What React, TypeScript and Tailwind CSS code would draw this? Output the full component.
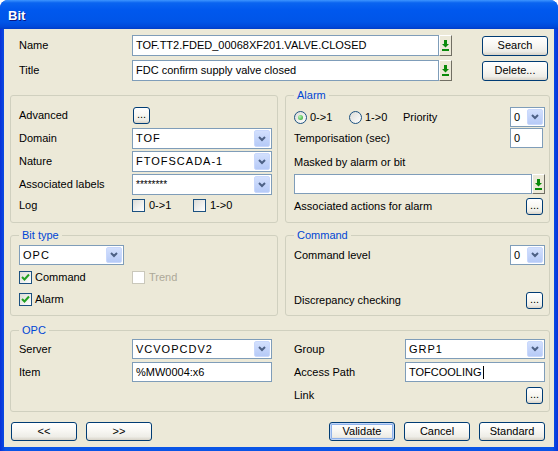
import React from 'react';

type BoxProps = { children?: React.ReactNode; className?: string };

// XP style push button
function XpButton({ children, className = '', isDefault = false }: BoxProps & { isDefault?: boolean }) {
  return (
    <div
      className={`flex shrink-0 items-center justify-center rounded-[3px] border border-[#003C74] bg-[linear-gradient(to_bottom,#ffffff_0%,#f8f7f3_45%,#eeede7_80%,#d8d3c8_100%)] text-[11px] leading-none text-black ${
        isDefault ? 'shadow-[inset_0_0_0_1px_#c2d6f8,inset_0_0_0_2px_#8fb2ea]' : ''
      } ${className}`}
    >
      {children}
    </div>
  );
}

function Dots({ className = '' }: { className?: string }) {
  return <XpButton className={`h-[17px] w-[17px] items-end pb-[3px] ${className}`}>...</XpButton>;
}

function Chevron() {
  return (
    <svg width="8" height="6" viewBox="0 0 8 6">
      <polyline points="1,1 4,4 7,1" fill="none" stroke="#4D6185" strokeWidth="2" />
    </svg>
  );
}

function Combo({ value, className = '', spaced = false }: { value: string; className?: string; spaced?: boolean }) {
  return (
    <div className={`flex shrink-0 border border-[#7F9DB9] bg-white ${className}`}>
      <div className={`flex min-w-0 flex-1 items-center overflow-hidden whitespace-nowrap pl-[3px] ${spaced ? 'tracking-[1px]' : ''}`}>
        {value}
      </div>
      <div className="m-px flex w-[16px] items-center justify-center rounded-[2px] border border-[#c9d8fc] bg-[linear-gradient(to_bottom,#d3e0fd,#b6caf7)]">
        <Chevron />
      </div>
    </div>
  );
}

function TextBox({ children, className = '' }: BoxProps) {
  return (
    <div className={`flex shrink-0 items-center whitespace-nowrap border border-[#7F9DB9] bg-white pl-[3px] ${className}`}>
      {children}
    </div>
  );
}

function GreenArrow() {
  return (
    <svg width="7" height="11" viewBox="0 0 7 11">
      <rect x="2" y="0" width="3" height="4" fill="#0A8A0A" />
      <polygon points="0,4 7,4 3.5,7.5" fill="#0A8A0A" />
      <rect x="0" y="9" width="7" height="2" fill="#0A8A0A" />
    </svg>
  );
}

function BrowseBox({ value, className = '' }: { value: string; className?: string }) {
  return (
    <div className={`flex shrink-0 ${className}`}>
      <div className="flex min-w-0 flex-1 items-center whitespace-nowrap border border-[#7F9DB9] bg-white pl-[3px]">{value}</div>
      <div className="flex w-[13px] items-center justify-center border border-b-[#716F64] border-l-white border-r-[#716F64] border-t-white bg-[#ECE9D8]">
        <GreenArrow />
      </div>
    </div>
  );
}

function Check({ checked = false, disabled = false }: { checked?: boolean; disabled?: boolean }) {
  return (
    <div
      className={`flex h-[13px] w-[13px] shrink-0 items-center justify-center border ${
        disabled ? 'border-[#CAC8BB] bg-white' : 'border-[#1C5180] bg-[linear-gradient(135deg,#dcdcd7,#ffffff)]'
      }`}
    >
      {checked && (
        <svg width="9" height="9" viewBox="0 0 9 9">
          <path d="M1 4 L3.5 6.5 L8 1.5" fill="none" stroke="#21A121" strokeWidth="2" />
        </svg>
      )}
    </div>
  );
}

function Radio({ checked = false }: { checked?: boolean }) {
  return (
    <div className="flex h-[13px] w-[13px] shrink-0 items-center justify-center rounded-full border border-[#1C5180] bg-[linear-gradient(135deg,#dcdcd7,#ffffff)]">
      {checked && <div className="h-[5px] w-[5px] rounded-full bg-[radial-gradient(circle_at_35%_35%,#b4f4b4,#21A121)]" />}
    </div>
  );
}

function Frame({ label, className = '', children }: BoxProps & { label?: string }) {
  return (
    <div className={`relative shrink-0 rounded-[3px] border border-[#D0D0BF] ${className}`}>
      {label && (
        <span className="absolute -top-[7px] left-[8px] bg-[#ECE9D8] px-[3px] leading-[13px] text-[#0046D5]">{label}</span>
      )}
      {children}
    </div>
  );
}

export default function App() {
  return (
    <div className="h-[451px] w-[558px] bg-white font-['Liberation_Sans',Arial,sans-serif] text-[11px] text-black">
      <div className="flex h-full w-full flex-col overflow-hidden rounded-t-[8px] bg-[linear-gradient(to_right,#0831D9,#0A55E6_1%,#0A55E6_99%,#0831D9)]">
        {/* title bar */}
        <div className="flex h-[29px] shrink-0 items-center bg-[linear-gradient(to_bottom,#3d95ff_0%,#0a64f0_10%,#0058ee_35%,#0055e8_75%,#0049da_92%,#003dc8_100%)] pl-[8px] pt-[2px]">
          <span className="text-[13px] font-bold text-white [text-shadow:1px_1px_0_#0a1883]">Bit</span>
        </div>

        {/* client area */}
        <div className="mx-[4px] mb-[4px] flex flex-1 flex-col bg-[#ECE9D8] pt-[6px]">
          <div className="flex h-[21px] items-center pl-[15px]">
            <span className="w-[113px]">Name</span>
            <BrowseBox className="h-[21px] w-[320px]" value="TOF.TT2.FDED_00068XF201.VALVE.CLOSED" />
            <XpButton className="ml-[30px] h-[20px] w-[66px]">Search</XpButton>
          </div>
          <div className="mt-[4px] flex h-[21px] items-center pl-[15px]">
            <span className="w-[113px]">Title</span>
            <BrowseBox className="h-[21px] w-[320px]" value="FDC confirm supply valve closed" />
            <XpButton className="ml-[30px] h-[20px] w-[66px]">Delete...</XpButton>
          </div>

          {/* general + alarm */}
          <div className="mt-[14px] flex gap-[7px] pl-[6px]">
            <Frame className="h-[128px] w-[268px] pl-[8px] pt-[11px]">
              <div className="flex h-[17px] items-center">
                <span className="w-[114px]">Advanced</span>
                <Dots />
              </div>
              <div className="mt-[4px] flex h-[21px] items-center">
                <span className="w-[113px]">Domain</span>
                <Combo className="h-[21px] w-[140px]" value="TOF" spaced />
              </div>
              <div className="mt-[2px] flex h-[21px] items-center">
                <span className="w-[113px]">Nature</span>
                <Combo className="h-[21px] w-[140px]" value="FTOFSCADA-1" spaced />
              </div>
              <div className="mt-[2px] flex h-[21px] items-center">
                <span className="w-[113px]">Associated labels</span>
                <Combo className="h-[21px] w-[140px] text-[10px]" value="********" />
              </div>
              <div className="mt-[4px] flex h-[13px] items-center">
                <span className="w-[113px]">Log</span>
                <div className="flex w-[61px] items-center">
                  <Check />
                  <span className="ml-[4px]">0-&gt;1</span>
                </div>
                <Check />
                <span className="ml-[4px]">1-&gt;0</span>
              </div>
            </Frame>

            <Frame label="Alarm" className="h-[128px] w-[265px] pl-[8px] pr-[4px] pt-[11px]">
              <div className="flex h-[20px] items-center">
                <div className="flex w-[55px] items-center">
                  <Radio checked />
                  <span className="ml-[3px]">0-&gt;1</span>
                </div>
                <div className="flex w-[54px] items-center">
                  <Radio />
                  <span className="ml-[3px]">1-&gt;0</span>
                </div>
                <span>Priority</span>
                <Combo className="ml-auto h-[20px] w-[35px]" value="0" />
              </div>
              <div className="mt-[1px] flex h-[20px] items-center">
                <span>Temporisation (sec)</span>
                <TextBox className="ml-auto mr-[2px] h-[20px] w-[33px]">0</TextBox>
              </div>
              <div className="mt-[7px] flex h-[14px] items-center">Masked by alarm or bit</div>
              <BrowseBox className="mt-[5px] h-[20px] w-full" value="" />
              <div className="mt-[4px] flex h-[17px] items-center">
                <span>Associated actions for alarm</span>
                <Dots className="ml-auto mr-[2px]" />
              </div>
            </Frame>
          </div>

          {/* bit type + command */}
          <div className="mt-[12px] flex gap-[7px] pl-[6px]">
            <Frame label="Bit type" className="h-[81px] w-[268px] pl-[8px] pt-[9px]">
              <Combo className="h-[20px] w-[105px]" value="OPC" spaced />
              <div className="mt-[6px] flex h-[13px] items-center">
                <div className="flex w-[113px] items-center">
                  <Check checked />
                  <span className="ml-[3px]">Command</span>
                </div>
                <Check disabled />
                <span className="ml-[4px] text-[#ACA899]">Trend</span>
              </div>
              <div className="mt-[9px] flex h-[13px] items-center">
                <Check checked />
                <span className="ml-[3px]">Alarm</span>
              </div>
            </Frame>

            <Frame label="Command" className="h-[81px] w-[265px] pl-[8px] pr-[4px] pt-[9px]">
              <div className="flex h-[20px] items-center">
                <span>Command level</span>
                <Combo className="ml-auto h-[20px] w-[35px]" value="0" />
              </div>
              <div className="mt-[27px] flex h-[17px] items-center">
                <span>Discrepancy checking</span>
                <Dots className="ml-auto mr-[2px]" />
              </div>
            </Frame>
          </div>

          {/* OPC */}
          <Frame label="OPC" className="ml-[6px] mt-[14px] h-[82px] w-[540px] pl-[8px] pr-[4px] pt-[8px]">
            <div className="flex h-[20px] items-center">
              <span className="w-[113px]">Server</span>
              <Combo className="h-[20px] w-[140px]" value="VCVOPCDV2" spaced />
              <span className="ml-[22px] w-[111px]">Group</span>
              <Combo className="h-[20px] w-[140px]" value="GRP1" spaced />
            </div>
            <div className="mt-[3px] flex h-[20px] items-center">
              <span className="w-[113px]">Item</span>
              <TextBox className="h-[20px] w-[140px]">%MW0004:x6</TextBox>
              <span className="ml-[22px] w-[111px]">Access Path</span>
              <TextBox className="h-[20px] w-[140px]">
                TOFCOOLING
                <span className="ml-px inline-block h-[13px] w-px bg-black" />
              </TextBox>
            </div>
            <div className="mt-[5px] flex h-[17px] items-center pl-[275px]">
              <span>Link</span>
              <Dots className="ml-auto mr-[2px]" />
            </div>
          </Frame>

          {/* buttons */}
          <div className="mt-[10px] flex h-[19px] gap-[9px] pl-[7px] pr-[9px]">
            <XpButton className="h-[19px] w-[66px]">&lt;&lt;</XpButton>
            <XpButton className="h-[19px] w-[66px]">&gt;&gt;</XpButton>
            <XpButton isDefault className="ml-auto h-[19px] w-[66px]">Validate</XpButton>
            <XpButton className="h-[19px] w-[66px]">Cancel</XpButton>
            <XpButton className="h-[19px] w-[66px]">Standard</XpButton>
          </div>
        </div>
      </div>
    </div>
  );
}
